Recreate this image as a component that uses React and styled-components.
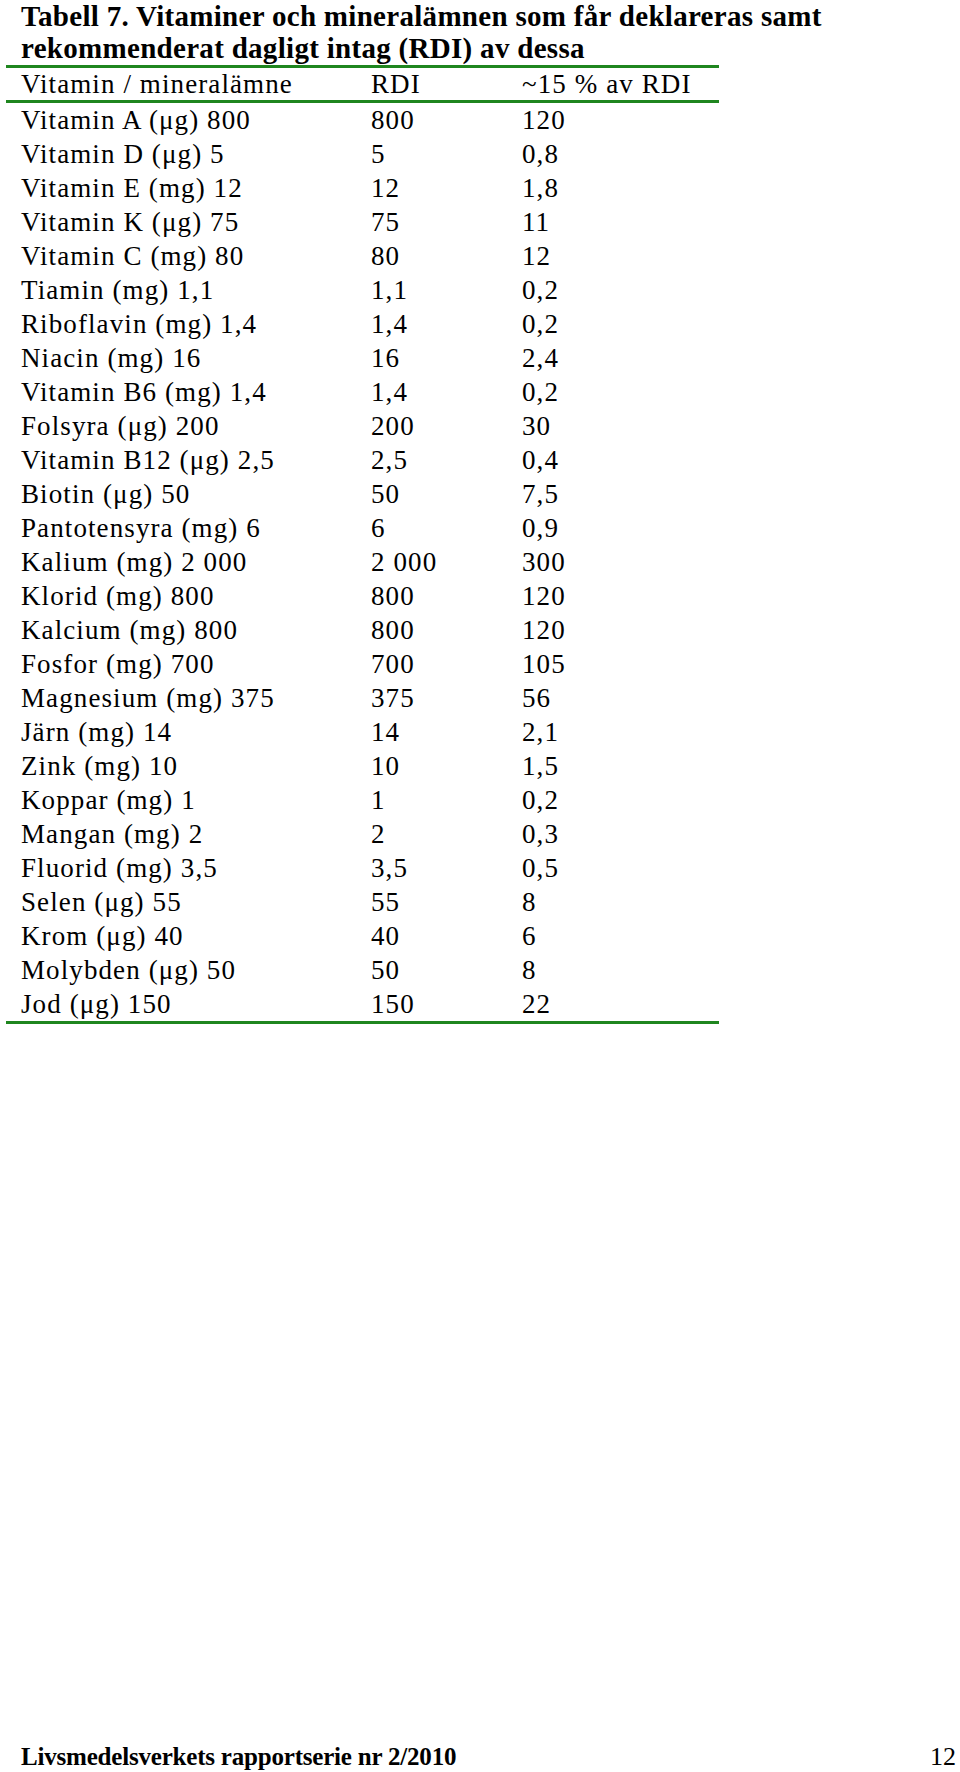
import React from "react";
import styled, { createGlobalStyle } from "styled-components";

const GlobalStyle = createGlobalStyle`
  html, body {
    margin: 0;
    padding: 0;
    background: #fff;
  }
  body {
    font-family: "Liberation Serif", "Times New Roman", serif;
    color: #000;
  }
`;

const Page = styled.div`
  min-height: 100vh;
  box-sizing: border-box;
  display: flex;
  flex-direction: column;
  overflow: hidden;
`;

const Title = styled.h1`
  margin: 0;
  padding-left: 21px;
  font-size: 29px;
  line-height: 32px;
  letter-spacing: 0.3px;
  font-weight: bold;
  height: 65px;
  white-space: nowrap;
`;

const Table = styled.div`
  margin-left: 6px;
  width: 713px;
  border-top: 3px solid #1f861f;
  border-bottom: 3px solid #1f861f;
`;

const Row = styled.div`
  display: grid;
  grid-template-columns: 350px 151px 212px;
  height: ${(props) => (props.header ? "32px" : "34px")};
  line-height: ${(props) => (props.header ? "32px" : "34px")};
  border-bottom: ${(props) => (props.header ? "3px solid #1f861f" : "none")};
  font-size: 27px;
  letter-spacing: 1.1px;
  white-space: nowrap;
`;

const Cell = styled.div`
  padding-left: 15px;
`;

const Footer = styled.div`
  margin-top: auto;
  display: flex;
  justify-content: space-between;
  align-items: baseline;
  padding: 0 4px 0 21px;
  height: 30px;
  line-height: 30px;
  font-size: 26px;
`;

const FooterTitle = styled.span`
  font-weight: bold;
  font-size: 25px;
  letter-spacing: -0.2px;
`;

const rows = [
  ["Vitamin A (μg) 800", "800", "120"],
  ["Vitamin D (μg) 5", "5", "0,8"],
  ["Vitamin E (mg) 12", "12", "1,8"],
  ["Vitamin K (μg) 75", "75", "11"],
  ["Vitamin C (mg) 80", "80", "12"],
  ["Tiamin (mg) 1,1", "1,1", "0,2"],
  ["Riboflavin (mg) 1,4", "1,4", "0,2"],
  ["Niacin (mg) 16", "16", "2,4"],
  ["Vitamin B6 (mg) 1,4", "1,4", "0,2"],
  ["Folsyra (μg) 200", "200", "30"],
  ["Vitamin B12 (μg) 2,5", "2,5", "0,4"],
  ["Biotin (μg) 50", "50", "7,5"],
  ["Pantotensyra (mg) 6", "6", "0,9"],
  ["Kalium (mg) 2 000", "2 000", "300"],
  ["Klorid (mg) 800", "800", "120"],
  ["Kalcium (mg) 800", "800", "120"],
  ["Fosfor (mg) 700", "700", "105"],
  ["Magnesium (mg) 375", "375", "56"],
  ["Järn (mg) 14", "14", "2,1"],
  ["Zink (mg) 10", "10", "1,5"],
  ["Koppar (mg) 1", "1", "0,2"],
  ["Mangan (mg) 2", "2", "0,3"],
  ["Fluorid (mg) 3,5", "3,5", "0,5"],
  ["Selen (μg) 55", "55", "8"],
  ["Krom (μg) 40", "40", "6"],
  ["Molybden (μg) 50", "50", "8"],
  ["Jod (μg) 150", "150", "22"],
];

const TableRow = ({ cells, header }) => (
  <Row header={header}>
    {cells.map((c, i) => (
      <Cell key={i}>{c}</Cell>
    ))}
  </Row>
);

export default function App() {
  return (
    <Page>
      <GlobalStyle />
      <Title>
        Tabell 7. Vitaminer och mineralämnen som får deklareras samt
        <br />
        rekommenderat dagligt intag (RDI) av dessa
      </Title>

      <Table>
        <TableRow header cells={["Vitamin / mineralämne", "RDI", "~15 % av RDI"]} />
        {rows.map((r, i) => (
          <TableRow key={i} cells={r} />
        ))}
      </Table>

      <Footer>
        <FooterTitle>Livsmedelsverkets rapportserie nr 2/2010</FooterTitle>
        <span>12</span>
      </Footer>
    </Page>
  );
}
